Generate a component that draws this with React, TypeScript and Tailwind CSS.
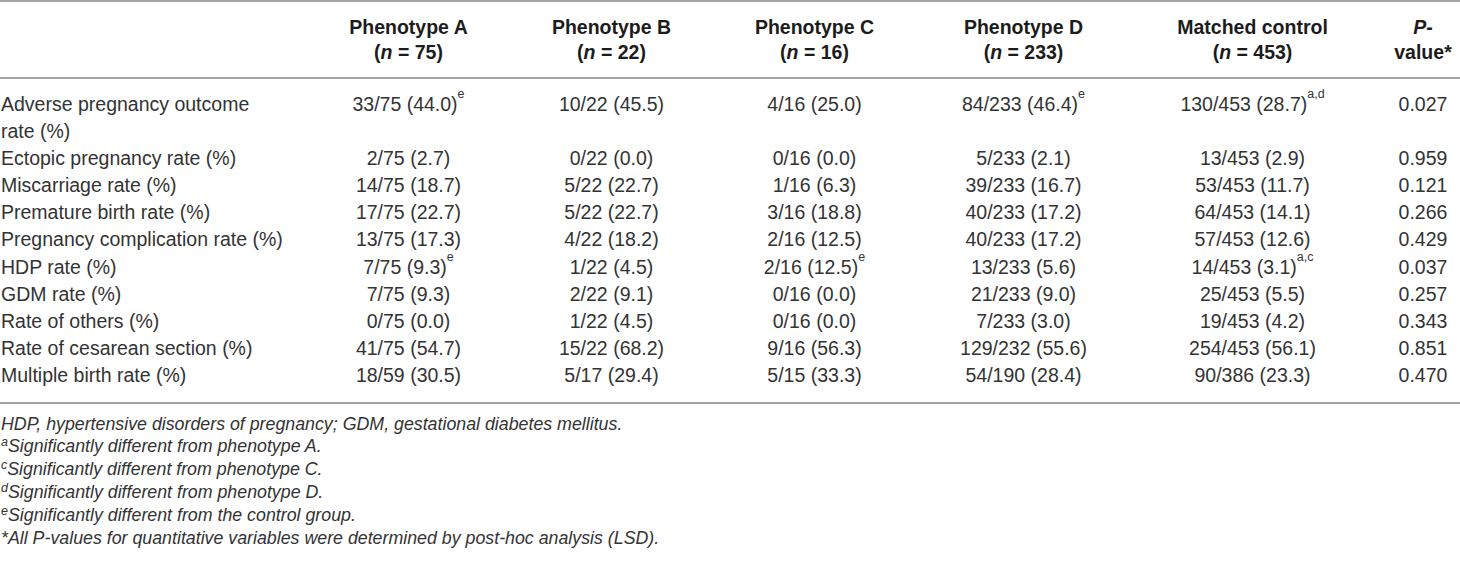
const cols = "grid grid-cols-[307px_203px_203px_203px_215px_243px_86px]";

type Cell = { v: string; sup?: string };

const rows: { label: React.ReactNode; cells: Cell[]; p: string }[] = [
  {
    label: (
      <>
        Adverse pregnancy outcome
        <br />
        rate (%)
      </>
    ),
    cells: [
      { v: "33/75 (44.0)", sup: "e" },
      { v: "10/22 (45.5)" },
      { v: "4/16 (25.0)" },
      { v: "84/233 (46.4)", sup: "e" },
      { v: "130/453 (28.7)", sup: "a,d" },
    ],
    p: "0.027",
  },
  {
    label: "Ectopic pregnancy rate (%)",
    cells: [{ v: "2/75 (2.7)" }, { v: "0/22 (0.0)" }, { v: "0/16 (0.0)" }, { v: "5/233 (2.1)" }, { v: "13/453 (2.9)" }],
    p: "0.959",
  },
  {
    label: "Miscarriage rate (%)",
    cells: [{ v: "14/75 (18.7)" }, { v: "5/22 (22.7)" }, { v: "1/16 (6.3)" }, { v: "39/233 (16.7)" }, { v: "53/453 (11.7)" }],
    p: "0.121",
  },
  {
    label: "Premature birth rate (%)",
    cells: [{ v: "17/75 (22.7)" }, { v: "5/22 (22.7)" }, { v: "3/16 (18.8)" }, { v: "40/233 (17.2)" }, { v: "64/453 (14.1)" }],
    p: "0.266",
  },
  {
    label: "Pregnancy complication rate (%)",
    cells: [{ v: "13/75 (17.3)" }, { v: "4/22 (18.2)" }, { v: "2/16 (12.5)" }, { v: "40/233 (17.2)" }, { v: "57/453 (12.6)" }],
    p: "0.429",
  },
  {
    label: "HDP rate (%)",
    cells: [
      { v: "7/75 (9.3)", sup: "e" },
      { v: "1/22 (4.5)" },
      { v: "2/16 (12.5)", sup: "e" },
      { v: "13/233 (5.6)" },
      { v: "14/453 (3.1)", sup: "a,c" },
    ],
    p: "0.037",
  },
  {
    label: "GDM rate (%)",
    cells: [{ v: "7/75 (9.3)" }, { v: "2/22 (9.1)" }, { v: "0/16 (0.0)" }, { v: "21/233 (9.0)" }, { v: "25/453 (5.5)" }],
    p: "0.257",
  },
  {
    label: "Rate of others (%)",
    cells: [{ v: "0/75 (0.0)" }, { v: "1/22 (4.5)" }, { v: "0/16 (0.0)" }, { v: "7/233 (3.0)" }, { v: "19/453 (4.2)" }],
    p: "0.343",
  },
  {
    label: "Rate of cesarean section (%)",
    cells: [{ v: "41/75 (54.7)" }, { v: "15/22 (68.2)" }, { v: "9/16 (56.3)" }, { v: "129/232 (55.6)" }, { v: "254/453 (56.1)" }],
    p: "0.851",
  },
  {
    label: "Multiple birth rate (%)",
    cells: [{ v: "18/59 (30.5)" }, { v: "5/17 (29.4)" }, { v: "5/15 (33.3)" }, { v: "54/190 (28.4)" }, { v: "90/386 (23.3)" }],
    p: "0.470",
  },
];

const heads = [
  { t: "Phenotype A", n: "75" },
  { t: "Phenotype B", n: "22" },
  { t: "Phenotype C", n: "16" },
  { t: "Phenotype D", n: "233" },
  { t: "Matched control", n: "453" },
];

const notes: { sup?: string; text: string }[] = [
  { text: "HDP, hypertensive disorders of pregnancy; GDM, gestational diabetes mellitus." },
  { sup: "a", text: "Significantly different from phenotype A." },
  { sup: "c", text: "Significantly different from phenotype C." },
  { sup: "d", text: "Significantly different from phenotype D." },
  { sup: "e", text: "Significantly different from the control group." },
  { text: "*All P-values for quantitative variables were determined by post-hoc analysis (LSD)." },
];

export default function App() {
  return (
    <div className="w-[1460px] h-[563px] bg-white text-[#333] font-['Liberation_Sans',Arial,sans-serif]">
      {/* header */}
      <div className={`${cols} h-[79px] border-t-2 border-b-2 border-[#a5a5a5] items-center text-[19.5px] leading-[25px] font-bold text-[#1c1c1c]`}>
        <div />
        {heads.map((h) => (
          <div key={h.t} className="text-center">
            <div>{h.t}</div>
            <div>
              (<span className="italic">n</span> = {h.n})
            </div>
          </div>
        ))}
        <div className="text-center pl-3">
          <div className="italic">P-</div>
          <div>value*</div>
        </div>
      </div>

      {/* body */}
      <div className="pt-[12px] pb-[13px] border-b-2 border-[#a5a5a5] text-[19.5px] leading-[27.1px]">
        {rows.map((r, i) => (
          <div key={i} className={cols}>
            <div className="pl-[1px] whitespace-nowrap">{r.label}</div>
            {r.cells.map((c, j) => (
              <div key={j} className="text-center whitespace-nowrap">
                {c.v}
                {c.sup && <sup className="text-[12.5px] -top-[13px]">{c.sup}</sup>}
              </div>
            ))}
            <div className="text-center pl-3">{r.p}</div>
          </div>
        ))}
      </div>

      {/* footnotes */}
      <div className="pt-[8.5px] pl-[1px] italic text-[17.8px] leading-[22.8px] text-[#333]">
        {notes.map((n, i) => (
          <div key={i}>
            {n.sup && <sup className="text-[12.5px] -top-[6px]">{n.sup}</sup>}
            {n.text}
          </div>
        ))}
      </div>
    </div>
  );
}
